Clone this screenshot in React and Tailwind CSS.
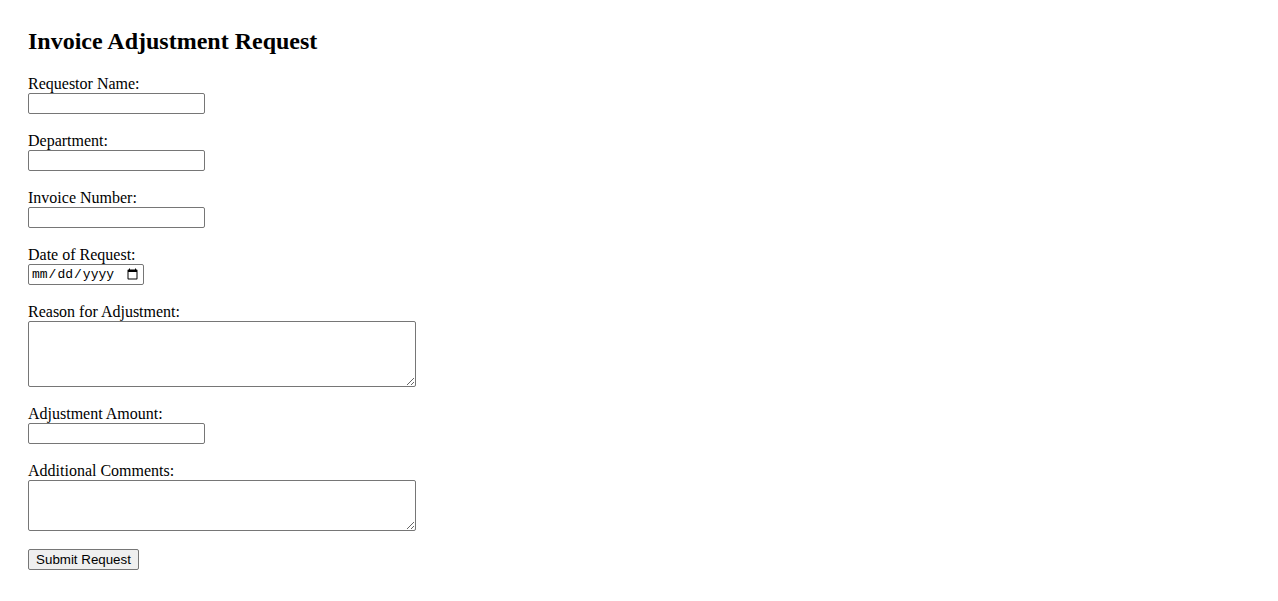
const fields = [
  { id: "requestor", label: "Requestor Name:", type: "text" },
  { id: "department", label: "Department:", type: "text" },
  { id: "invoice", label: "Invoice Number:", type: "text" },
  { id: "date", label: "Date of Request:", type: "date" },
  { id: "reason", label: "Reason for Adjustment:", type: "textarea", rows: "h-[66px]" },
  { id: "amount", label: "Adjustment Amount:", type: "text" },
  { id: "comments", label: "Additional Comments:", type: "textarea", rows: "h-[51px]" },
];

const boxClass =
  "block border border-[#767676] rounded-[2px] bg-white outline-none";

const Field = ({ field }) => {
  let control;
  if (field.type === "textarea") {
    control = (
      <textarea
        id={field.id}
        className={`${boxClass} w-[388px] ${field.rows} resize`}
      />
    );
  } else if (field.type === "date") {
    control = (
      <input
        id={field.id}
        type="date"
        className={`${boxClass} w-[116px] h-[21px] px-[2px] text-[13px] font-['Liberation_Mono',monospace]`}
      />
    );
  } else {
    control = (
      <input
        id={field.id}
        type="text"
        className={`${boxClass} w-[177px] h-[21px] px-[2px] text-[13px]`}
      />
    );
  }

  return (
    <div className="mb-[18px]">
      <label htmlFor={field.id} className="block leading-[18px]">
        {field.label}
      </label>
      {control}
    </div>
  );
};

export default function App() {
  return (
    <div className="min-h-screen bg-white text-black px-[28px] pt-[27px] font-['Liberation_Serif',serif] text-[16px]">
      <h2 className="text-[24px] font-bold leading-[28px] mb-[20px]">
        Invoice Adjustment Request
      </h2>
      <form onSubmit={(e) => e.preventDefault()}>
        {fields.map((field) => (
          <Field key={field.id} field={field} />
        ))}
        <button
          type="submit"
          className="block h-[21px] w-[111px] border border-[#767676] rounded-[2px] bg-[#efefef] text-[13.33px] leading-none font-['Liberation_Sans',Arial,sans-serif]"
        >
          Submit Request
        </button>
      </form>
    </div>
  );
}
